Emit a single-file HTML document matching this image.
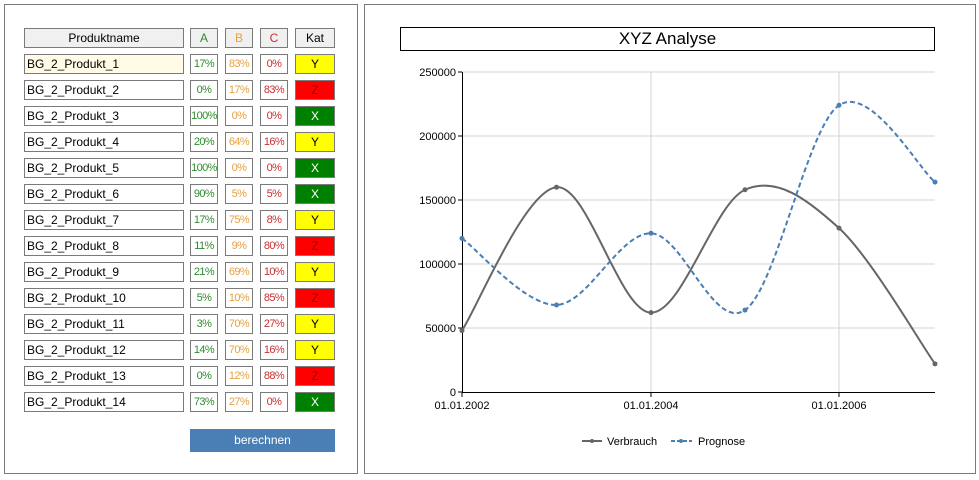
<!DOCTYPE html>
<html><head><meta charset="utf-8"><style>
body{margin:0;width:979px;height:480px;background:#fff;position:relative;font-family:"Liberation Sans",sans-serif;overflow:hidden}
.p{position:absolute;border:1px solid #7a7a7a;box-sizing:border-box}
.b{position:absolute;box-sizing:border-box;border:1px solid #7a7a7a;height:20px;font-size:12px;line-height:18px;background:#fff;white-space:nowrap;overflow:hidden}
.c{text-align:center}
.pc{font-size:11px;letter-spacing:-0.6px}
.h{background:#f0f0f0}
.n{padding-left:2px;color:#000}
.g{color:#2e8b2e}.o{color:#e8a040}.r{color:#c83030}
.y{background:#ffff00;color:#000}.z{background:#ff0000;color:#900}.x{background:#008000;color:#fff}
</style></head><body>
<div class="p" style="left:4px;top:4px;width:354px;height:470px"></div>
<div class="p" style="left:364px;top:4px;width:612px;height:470px"></div>
<div id="t"></div>
<div style="position:absolute;left:190px;top:429px;width:145px;height:23px;background:#4a7fb5;color:#fff;font-size:12px;line-height:23px;text-align:center">berechnen</div>
<div style="position:absolute;left:400px;top:27px;width:535px;height:24px;border:1px solid #000;box-sizing:border-box;text-align:center;font-size:17px;line-height:22px">XYZ Analyse</div>
<svg style="position:absolute;left:0;top:0" width="979" height="480" id="s"></svg>
<script>
var rows=[[17,83,0,'Y'],[0,17,83,'Z'],[100,0,0,'X'],[20,64,16,'Y'],[100,0,0,'X'],[90,5,5,'X'],[17,75,8,'Y'],[11,9,80,'Z'],[21,69,10,'Y'],[5,10,85,'Z'],[3,70,27,'Y'],[14,70,16,'Y'],[0,12,88,'Z'],[73,27,0,'X']];
var h='';
h+='<div class="b h c" style="left:24px;top:28px;width:160px">Produktname</div>';
h+='<div class="b h c g" style="left:190px;top:28px;width:28px">A</div>';
h+='<div class="b h c o" style="left:225px;top:28px;width:28px">B</div>';
h+='<div class="b h c r" style="left:260px;top:28px;width:28px">C</div>';
h+='<div class="b h c" style="left:295px;top:28px;width:40px">Kat</div>';
rows.forEach(function(r,i){var t=54+i*26;
h+='<div class="b n" style="left:24px;top:'+t+'px;width:160px;'+(i==0?'background:#fffbe6':'')+'">BG_2_Produkt_'+(i+1)+'</div>';
h+='<div class="b c pc g" style="left:190px;top:'+t+'px;width:28px">'+r[0]+'%</div>';
h+='<div class="b c pc o" style="left:225px;top:'+t+'px;width:28px">'+r[1]+'%</div>';
h+='<div class="b c pc r" style="left:260px;top:'+t+'px;width:28px">'+r[2]+'%</div>';
h+='<div class="b c '+r[3].toLowerCase()+'" style="left:295px;top:'+t+'px;width:40px">'+r[3]+'</div>';});
document.getElementById('t').innerHTML=h;
var X=[462,556.5,651,745,839,935];
function Y(v){return 392-v*0.00128}
function path(vs){var p=X.map(function(x,i){return [x,Y(vs[i])]});var d='M'+p[0][0]+','+p[0][1];
for(var i=0;i<p.length-1;i++){var p0=p[i-1]||p[i],p1=p[i],p2=p[i+1],p3=p[i+2]||p[i+1];
d+=' C'+(p1[0]+(p2[0]-p0[0])/6)+','+(p1[1]+(p2[1]-p0[1])/6)+' '+(p2[0]-(p3[0]-p1[0])/6)+','+(p2[1]-(p3[1]-p1[1])/6)+' '+p2[0]+','+p2[1];}
return [d,p];}
var s='';
[72,136,200,264,328].forEach(function(y){s+='<line x1="462" x2="935" y1="'+y+'" y2="'+y+'" stroke="#d3d3d3"/>';});
[651,839].forEach(function(x){s+='<line x1="'+x+'" x2="'+x+'" y1="72" y2="392" stroke="#d3d3d3"/>';});
s+='<line x1="462.5" x2="462.5" y1="72" y2="392" stroke="#000"/><line x1="462" x2="935" y1="392.5" y2="392.5" stroke="#000"/>';
['250000','200000','150000','100000','50000','0'].forEach(function(t,i){var y=72+i*64;s+='<line x1="458" x2="462" y1="'+y+'" y2="'+y+'" stroke="#000"/><text x="456" y="'+(y+4)+'" font-size="11" text-anchor="end">'+t+'</text>';});
[[462,'01.01.2002'],[651,'01.01.2004'],[839,'01.01.2006']].forEach(function(a){s+='<line x1="'+a[0]+'" x2="'+a[0]+'" y1="392" y2="397" stroke="#000"/><text x="'+a[0]+'" y="409" font-size="11" text-anchor="middle">'+a[1]+'</text>';});
var v=path([48000,160000,62000,158000,128000,22000]),q=path([120000,68000,124000,64000,224000,164000]);
s+='<path d="'+v[0]+'" fill="none" stroke="#666" stroke-width="2"/>';
s+='<path d="'+q[0]+'" fill="none" stroke="#4a7fb5" stroke-width="2" stroke-dasharray="5,3"/>';
v[1].forEach(function(p){s+='<circle cx="'+p[0]+'" cy="'+p[1]+'" r="2.5" fill="#666"/>';});
q[1].forEach(function(p){s+='<circle cx="'+p[0]+'" cy="'+p[1]+'" r="2.5" fill="#4a7fb5"/>';});
s+='<line x1="582" x2="602" y1="441" y2="441" stroke="#666" stroke-width="2"/><circle cx="592" cy="441" r="2" fill="#666"/><text x="607" y="445" font-size="11">Verbrauch</text>';
s+='<line x1="671" x2="692" y1="441" y2="441" stroke="#4a7fb5" stroke-width="2" stroke-dasharray="4,2"/><circle cx="681" cy="441" r="2" fill="#4a7fb5"/><text x="698" y="445" font-size="11">Prognose</text>';
document.getElementById('s').innerHTML=s;
</script>
</body></html>
